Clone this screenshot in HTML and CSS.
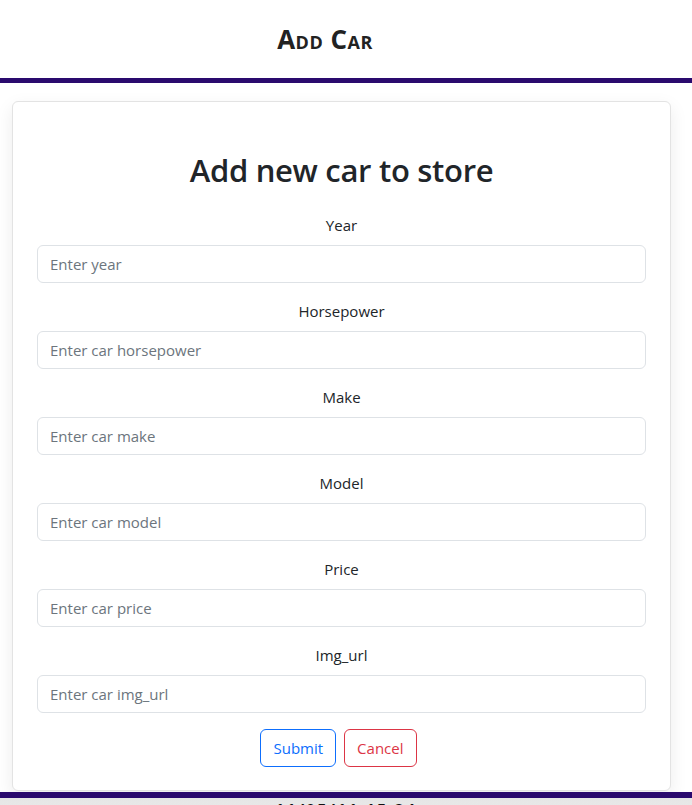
FILE: index.html
```html
<!DOCTYPE html>
<html>
<head>
<meta charset="utf-8">
<link rel="stylesheet" href="styles.css">
</head>
<body>
<header class="topbar">
  <h2 class="brand">Add Car</h2>
</header>
<main class="card">
  <h1 class="title">Add new car to store</h1>
  <form class="form">
    <div class="field">
      <label class="label">Year</label>
      <input class="input" placeholder="Enter year">
    </div>
    <div class="field">
      <label class="label">Horsepower</label>
      <input class="input" placeholder="Enter car horsepower">
    </div>
    <div class="field">
      <label class="label">Make</label>
      <input class="input" placeholder="Enter car make">
    </div>
    <div class="field">
      <label class="label">Model</label>
      <input class="input" placeholder="Enter car model">
    </div>
    <div class="field">
      <label class="label">Price</label>
      <input class="input" placeholder="Enter car price">
    </div>
    <div class="field">
      <label class="label">Img_url</label>
      <input class="input" placeholder="Enter car img_url">
    </div>
    <div class="actions">
      <button type="button" class="btn btn-primary">Submit</button>
      <button type="button" class="btn btn-danger">Cancel</button>
    </div>
  </form>
</main>
<footer class="footer">
  <p class="footer-text">11/05/11:15:24</p>
</footer>
</body>
</html>
```

FILE: styles.css
```css
* { box-sizing: border-box; }
html, body { margin: 0; padding: 0; }
body {
  font-family: "Open Sans", "Noto Sans", sans-serif;
  color: #212529;
  background: #fff;
  overflow: hidden;
  height: 805px;
}
.topbar {
  height: 83px;
  border-bottom: 5px solid #2a0a6e;
  display: flex;
  align-items: center;
  justify-content: center;
  padding-right: 42px;
}
.brand {
  margin: 0;
  font-size: 26px;
  font-weight: 700;
  font-variant: small-caps;
  letter-spacing: 0.5px;
  color: #222;
}
.card {
  margin: 18px 21px 0 12px;
  border: 1px solid #e3e3e3;
  border-radius: 6px;
  box-shadow: 0 6px 18px rgba(0,0,0,0.08);
  padding: 50px 24px 21px;
  height: 690px;
  background: #fff;
}
.title {
  margin: 0 0 24px;
  text-align: center;
  font-size: 31px;
  font-weight: 600;
  letter-spacing: -0.3px;
  line-height: 1.2;
}
.form { display: flex; flex-direction: column; gap: 16px; }
.field { display: flex; flex-direction: column; gap: 8px; }
.label {
  text-align: center;
  font-size: 15px;
  line-height: 24px;
}
.input {
  height: 38px;
  border: 1px solid #dee2e6;
  border-radius: 6px;
  padding: 6px 12px;
  font-family: inherit;
  font-size: 15px;
  color: #212529;
}
.input::placeholder { color: #6c757d; }
.actions { display: flex; justify-content: center; gap: 8px; padding-right: 6px; }
.btn {
  height: 38px;
  padding: 6px 12px;
  background: #fff;
  border-radius: 6px;
  font-family: inherit;
  font-size: 15px;
}
.btn-primary { border: 1px solid #0d6efd; color: #0d6efd; }
.btn-danger { border: 1px solid #dc3545; color: #dc3545; }
.footer {
  margin-top: 1px;
  border-top: 6px solid #2a0a6e;
  background: linear-gradient(#e6e6e6, #f3f3f3);
  height: 60px;
  text-align: center;
}
.footer-text {
  margin: 0;
  padding-top: 2px;
  font-weight: 700;
  font-size: 16px;
  line-height: 20px;
  letter-spacing: 2px;
  color: #111;
}
```
